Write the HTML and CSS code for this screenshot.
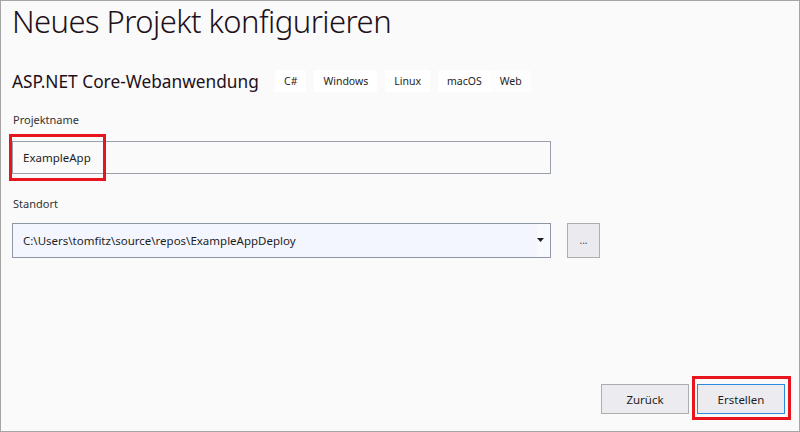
FILE: index.html
```html
<!DOCTYPE html>
<html lang="de">
<head>
<meta charset="utf-8">
<title>Neues Projekt konfigurieren</title>
<link rel="stylesheet" href="styles.css">
</head>
<body>
<div class="window">
  <h1 class="title">Neues Projekt konfigurieren</h1>
  <div class="template">
    <span class="template-name">ASP.NET Core-Webanwendung</span>
    <ul class="tags">
      <li class="tag">C#</li>
      <li class="tag">Windows</li>
      <li class="tag">Linux</li>
      <li class="tag">macOS</li>
      <li class="tag tag-last">Web</li>
    </ul>
  </div>

  <div class="field field-name">
    <label class="label">Projektname</label>
    <div class="input-wrap">
      <div class="input">ExampleApp</div>
      <div class="highlight highlight-name"></div>
    </div>
  </div>

  <div class="field field-location">
    <label class="label">Standort</label>
    <div class="location-row">
      <div class="select">
        <span class="select-text">C:\Users\tomfitz\source\repos\ExampleAppDeploy</span>
        <span class="select-arrow">
          <svg width="7" height="4" viewBox="0 0 7 4"><path d="M0 0H7L3.5 4Z" fill="#1e1e1e"/></svg>
        </span>
      </div>
      <div class="browse">...</div>
    </div>
  </div>

  <div class="footer">
    <button class="btn">Zurück</button>
    <div class="btn-wrap">
      <button class="btn btn-primary">Erstellen</button>
      <div class="highlight highlight-create"></div>
    </div>
  </div>
</div>
</body>
</html>
```

FILE: styles.css
```css
* { box-sizing: border-box; }
html, body { margin: 0; padding: 0; }
body {
  width: 800px;
  height: 432px;
  background: #fafafa;
  font-family: "Noto Sans", "Open Sans", sans-serif;
  color: #1e1e1e;
}
.window {
  width: 800px;
  height: 432px;
  border: 1px solid #a5a5a5;
  background: #fafafa;
  display: flex;
  flex-direction: column;
  padding: 0 0 0 11px;
}
.title {
  margin: 0;
  font-weight: 300;
  font-size: 31px;
  line-height: 40px;
  height: 42px;
  letter-spacing: -0.55px;
  color: #1e1019;
}
.template {
  margin-top: 23px;
  display: flex;
  align-items: center;
  height: 30px;
}
.template-name {
  font-size: 17.3px;
  color: #1e1019;
  width: 263px;
}
.tags {
  list-style: none;
  margin: 0;
  padding: 0;
  display: flex;
  gap: 8px;
}
.tag {
  background: #ffffff;
  height: 22px;
  line-height: 22px;
  padding: 0 9px;
  font-size: 10.5px;
  color: #1e1e1e;
  border-radius: 2px;
}
.tag-last { background: #fdfdfd; margin-left: -8px; }
.field { display: flex; flex-direction: column; }
.field-name { margin-top: 16px; }
.field-location { margin-top: 22px; }
.label {
  font-size: 11px;
  line-height: 16px;
  color: #333333;
  margin-left: 1px;
}
.input-wrap { position: relative; margin-top: 13px; width: 539px; }
.input {
  width: 539px;
  height: 33px;
  border: 1px solid #9aa1ad;
  background: #fafafa;
  font-size: 11.5px;
  line-height: 31px;
  padding-left: 10px;
  color: #1e1e1e;
}
.highlight {
  position: absolute;
  border: 3px solid #e8141e;
  pointer-events: none;
}
.highlight-name { left: -3px; top: -7px; width: 97px; height: 47px; }
.location-row {
  display: flex;
  align-items: center;
  margin-top: 11px;
  gap: 16px;
}
.select {
  width: 539px;
  height: 35px;
  border: 1px solid #8f96a3;
  background: #f3f6fe;
  display: flex;
  align-items: center;
  font-size: 11.5px;
  color: #1e1e1e;
}
.select-text { flex: 1; padding-left: 10px; }
.select-arrow {
  width: 13px;
  height: 33px;
  background: #f8f9fd;
  display: flex;
  align-items: center;
  justify-content: flex-start;
}
.select-arrow svg { display: block; margin-top: -1px; }
.browse {
  width: 33px;
  height: 35px;
  border: 1px solid #adadad;
  background: #ebebef;
  display: flex;
  align-items: center;
  justify-content: center;
  font-size: 10px;
  color: #444;
  padding-bottom: 2px;
}
.footer {
  margin-top: auto;
  display: flex;
  justify-content: flex-end;
  gap: 8px;
  padding: 0 14px 17px 0;
}
.btn {
  width: 88px;
  height: 30px;
  border: 1px solid #adadad;
  background: #ececf0;
  font-family: inherit;
  font-size: 11.5px;
  color: #1e1e1e;
  padding: 0;
}
.btn-primary { border-color: #2b8be0; }
.btn-wrap { position: relative; }
.highlight-create { left: -5px; top: -8px; width: 99px; height: 44px; }
```
